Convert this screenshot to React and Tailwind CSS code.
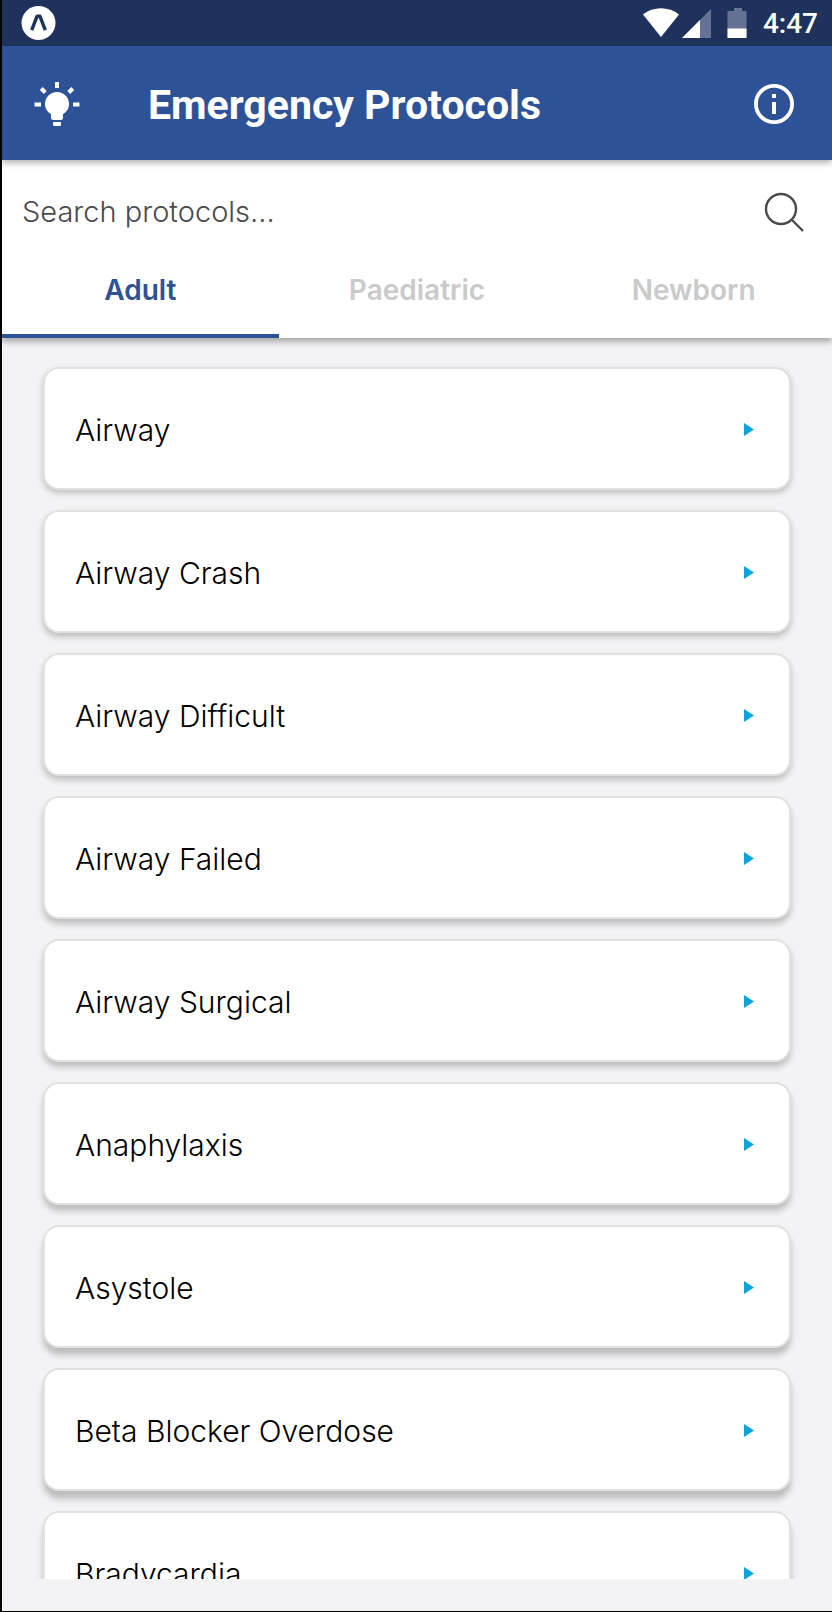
import { useState } from 'react';

const tabs = ['Adult', 'Paediatric', 'Newborn'];

// Shadows get deeper towards the bottom of the list
const protocols = [
  { name: 'Airway', shadow: 'shadow-[0_3px_6px_rgba(0,0,0,0.22)]' },
  { name: 'Airway Crash', shadow: 'shadow-[0_4px_6px_rgba(0,0,0,0.22)]' },
  { name: 'Airway Difficult', shadow: 'shadow-[0_4px_6px_rgba(0,0,0,0.22)]' },
  { name: 'Airway Failed', shadow: 'shadow-[0_5px_6px_rgba(0,0,0,0.22)]' },
  { name: 'Airway Surgical', shadow: 'shadow-[0_5px_6px_rgba(0,0,0,0.22)]' },
  { name: 'Anaphylaxis', shadow: 'shadow-[0_6px_6px_rgba(0,0,0,0.22)]' },
  { name: 'Asystole', shadow: 'shadow-[0_7px_6px_rgba(0,0,0,0.22)]' },
  { name: 'Beta Blocker Overdose', shadow: 'shadow-[0_8px_6px_rgba(0,0,0,0.22)]' },
  { name: 'Bradycardia', shadow: 'shadow-[0_8px_6px_rgba(0,0,0,0.22)]' },
];

function StatusBar() {
  return (
    <div className="h-[46px] shrink-0 bg-[#1f325c] flex items-center justify-between pl-[19px] pr-3.5">
      <svg width="35" height="35" viewBox="0 0 35 35">
        <circle cx="17.5" cy="17" r="17" fill="#fff" />
        <path d="M10.7 24.1 16.1 10.1h2.8L24.3 24.1" fill="none" stroke="#1f325c" strokeWidth="3.4" strokeLinejoin="round" />
      </svg>
      <div className="flex items-center">
        <svg width="106" height="32" viewBox="0 0 106 32">
          <path d="M0 7.500C10-.800 26-.800 36 7.500L18 30z" fill="#fff" />
          <path d="M68 2v29H39z" fill="#657295" />
          <path d="M57 13v18H39z" fill="#fff" />
          <path d="M91 1h8v3h4.500v27h-19V4H91z" fill="#657295" />
          <path d="M84.500 21.500h19V31h-19z" fill="#fff" />
        </svg>
        <span className="ml-3.5 pt-0.5 font-[Roboto] text-[28px] leading-8 font-medium text-white">4:47</span>
      </div>
    </div>
  );
}

function Header() {
  return (
    <header className="relative z-20 h-[114px] shrink-0 bg-[#2d5297] flex items-center pt-0.5 pl-8 pr-[38px] shadow-[0_3px_6px_rgba(0,0,0,0.3)]">
      <button type="button" aria-label="Tips">
        <svg width="46" height="46" viewBox="0 0 46 46" fill="#fff">
          <path d="M23 11a12 12 0 0 0-12 12c0 4.600 2.400 8 6 10.200V37a2 2 0 0 0 2 2h8a2 2 0 0 0 2-2v-3.800c3.600-2.200 6-5.600 6-10.200a12 12 0 0 0-12-12z" />
          <path d="M19 41h8v2.500a1.500 1.500 0 0 1-1.500 1.500h-5a1.500 1.500 0 0 1-1.500-1.500z" />
          <path d="M21 1h4v6h-4zM.500 21.500h6.500v4H.500zM39 21.500h6.500v4H39z" />
          <path d="M5.800 9 8.700 6.100l4 4L9.800 13zM40.200 9l-2.900-2.900-4 4 2.900 2.900z" />
        </svg>
      </button>
      <h1 className="ml-[68px] pt-0.5 flex-1 font-[Roboto] text-[41px] leading-[48px] font-bold text-white">Emergency Protocols</h1>
      <button type="button" aria-label="About">
        <svg width="40" height="40" viewBox="0 0 40 40">
          <circle cx="20" cy="20" r="18.100" fill="none" stroke="#fff" strokeWidth="3.800" />
          <path d="M18 10h4v4h-4zM18 18h4v12h-4z" fill="#fff" />
        </svg>
      </button>
    </header>
  );
}

export default function App() {
  const [query, setQuery] = useState('');
  const [activeTab, setActiveTab] = useState('Adult');

  const visible = protocols.filter((p) => p.name.toLowerCase().includes(query.toLowerCase()));

  return (
    <div className="h-screen flex flex-col bg-[#f3f3f5] border-l-2 border-b border-black overflow-hidden font-[Inter,sans-serif]">
      <StatusBar />
      <Header />

      <div className="relative z-10 shrink-0 bg-white shadow-[0_4px_6px_rgba(0,0,0,0.3)]">
        {/* Search */}
        <label className="h-[104px] flex items-center pl-5 pr-7">
          <input
            type="text"
            aria-label="Search protocols"
            placeholder="Search protocols..."
            value={query}
            onChange={(e) => setQuery(e.target.value)}
            className="flex-1 min-w-0 bg-transparent text-[29px] leading-9 font-light text-[#4a4a4d] placeholder:text-[#4a4a4d] outline-none"
          />
          <svg width="40" height="40" viewBox="0 0 40 40" fill="none" stroke="#4a4a4d" strokeWidth="2.400">
            <circle cx="17" cy="17" r="15" />
            <path d="M28 28l11 11" />
          </svg>
        </label>

        {/* Tabs */}
        <div className="grid grid-cols-3" role="tablist">
          {tabs.map((tab) => (
            <button
              key={tab}
              type="button"
              role="tab"
              aria-selected={tab === activeTab}
              onClick={() => setActiveTab(tab)}
              className={`pt-2.5 pb-7 border-b-4 text-[28px] leading-8 font-semibold ${
                tab === activeTab ? 'text-[#2d5297] border-[#2d5297]' : 'text-[#cacaca] border-transparent'
              }`}
            >
              {tab}
            </button>
          ))}
        </div>
      </div>

      {/* Protocol list */}
      <main className="flex-1 min-h-0 mb-8 overflow-y-auto [scrollbar-width:none]">
        <ul className="flex flex-col gap-5 pt-[29px] px-[41px] pb-5">
          {visible.map(({ name, shadow }) => (
            <li key={name}>
              <button
                type="button"
                className={`w-full h-[123px] flex items-center justify-between pt-0.5 pl-[30px] pr-[35px] bg-white border-2 border-[#e1e1e2] rounded-2xl text-[30px] leading-9 font-light text-black text-left ${shadow}`}
              >
                {name}
                <svg width="10" height="13" viewBox="0 0 10 13" fill="#0ba5dc">
                  <path d="M0 0l10 6.500L0 13z" />
                </svg>
              </button>
            </li>
          ))}
        </ul>
      </main>
    </div>
  );
}
